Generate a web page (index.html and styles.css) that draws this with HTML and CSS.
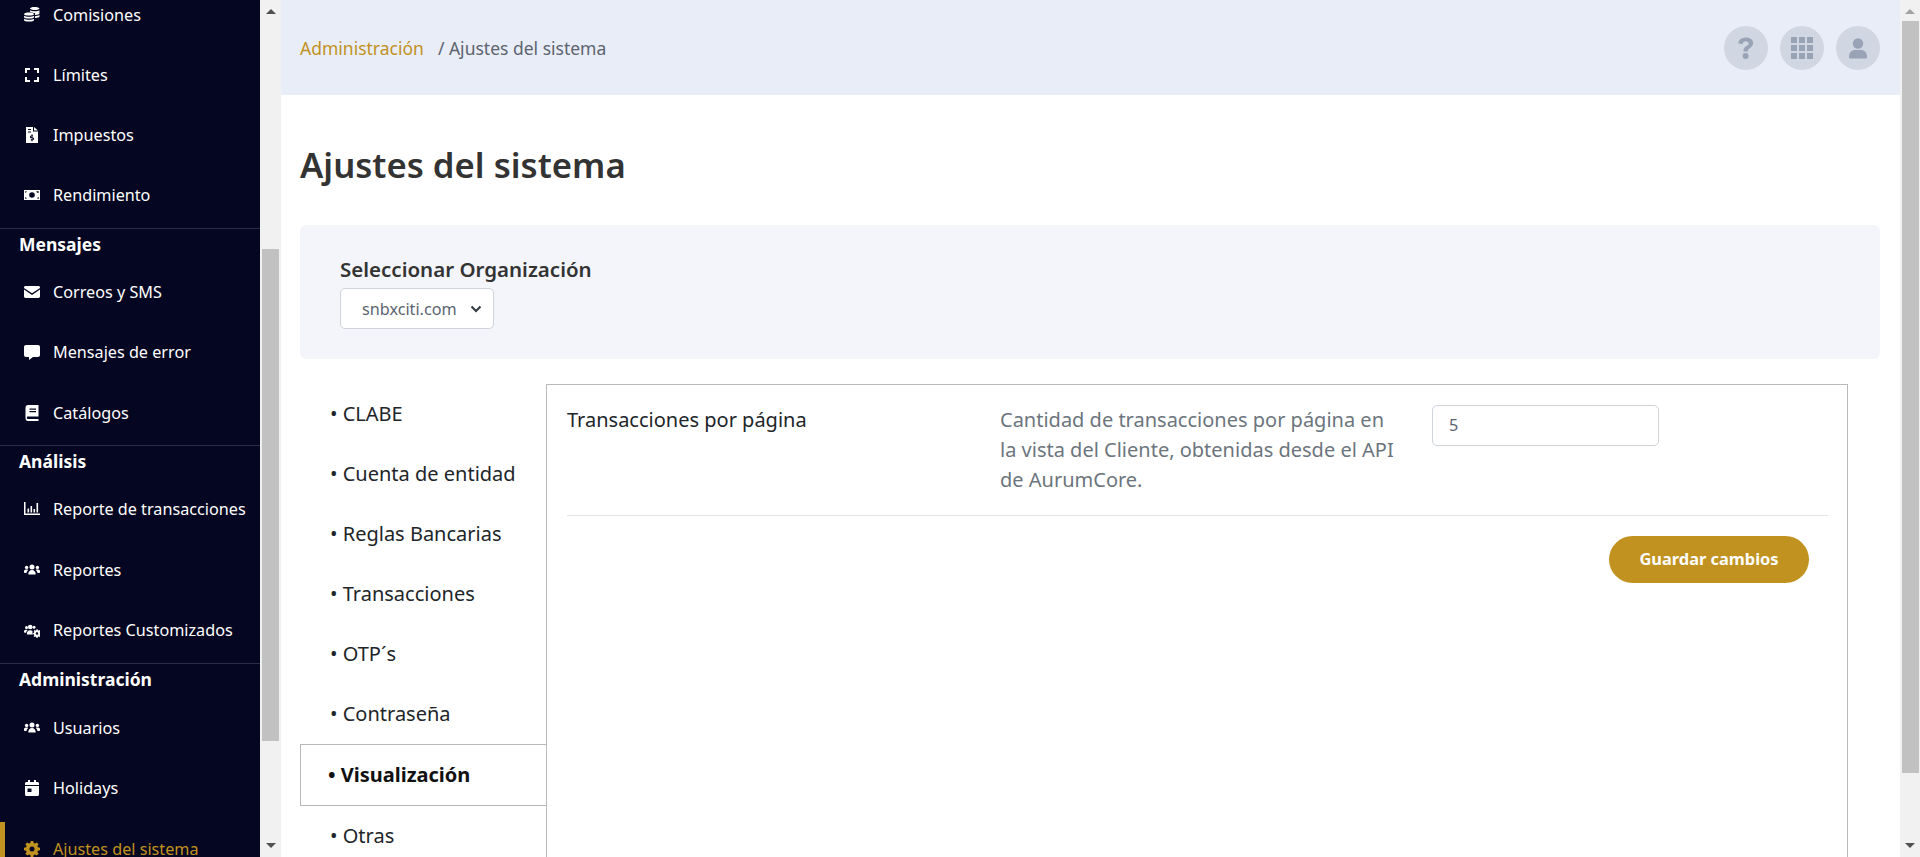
FILE: index.html
```html
<!DOCTYPE html>
<html lang="es">
<head>
    <meta charset="UTF-8">
    <meta name="viewport" content="width=device-width, initial-scale=1.0">
    <title>Ajustes del sistema</title>
    <link rel="stylesheet" href="styles.css">
</head>
<body>
    <aside class="sidebar">
        <nav class="side-list">
            <a class="side-item" href="#">
                <svg class="side-icon" viewBox="0 0 16 16"><path d="M6 1.500c0-.8 2-1.500 4.500-1.500s5 .7 5 1.500S13.500 3 11 3 6 2.300 6 1.500zM6 3.200C7 4 9 4.300 11 4.300s3.600-.4 4.500-1v1.300c0 .8-2 1.500-4.500 1.500-.6 0-1.200 0-1.700-.1C8.500 5.200 7 4.800 6 4.700zM0 7c0-.9 2.200-1.600 5-1.600s5 .7 5 1.600-2.200 1.600-5 1.600S0 7.900 0 7zm0 1.700c1 .8 3 1.100 5 1.100s4-.3 5-1.100V10c0 .9-2.200 1.600-5 1.600S0 10.900 0 10zm0 3c1 .8 3 1.100 5 1.100s4-.3 5-1.100V13c0 .9-2.200 1.600-5 1.600S0 13.900 0 13zm11-5.500c1.800-.1 3.500-.5 4.500-1.100v1.300c0 .7-1.800 1.300-4.500 1.500zm0 3c1.800-.1 3.500-.5 4.500-1.100v1.300c0 .7-1.800 1.300-4.500 1.500z"/></svg>
                <span>Comisiones</span>
            </a>
            <a class="side-item" href="#">
                <svg class="side-icon" viewBox="0 0 16 16"><path d="M1 1h5v2H3v3H1zM10 1h5v5h-2V3h-3zM1 10h2v3h3v2H1zM13 10h2v5h-5v-2h3z"/></svg>
                <span>Límites</span>
            </a>
            <a class="side-item" href="#">
                <svg class="side-icon" viewBox="0 0 16 16"><path fill-rule="evenodd" d="M2 0h7v4.500h5V16H2zM4 2v1h3V2zm0 2.500v1h3v-1zM10 0l4 3.500h-4zM7.400 7.500v1c-1 .2-1.500.8-1.500 1.500 0 1.800 3 1.200 3 2 0 .4-.8.4-1.900.1l-.4 1c.3.100.5.200.8.200v1h1.200v-1c1-.2 1.500-.8 1.500-1.500 0-1.800-3-1.300-3-2 0-.4.700-.4 1.700-.1l.4-1-.6-.2v-1z"/></svg>
                <span>Impuestos</span>
            </a>
            <a class="side-item" href="#">
                <svg class="side-icon" viewBox="0 0 16 16"><path fill-rule="evenodd" d="M0 3h16v10H0zm8 2.200a2.800 2.800 0 1 0 0 5.600 2.800 2.800 0 0 0 0-5.600zM1.200 4.200v1.500c.8 0 1.500-.7 1.500-1.500zm11.100 0c0 .8.700 1.500 1.500 1.500h1V4.200zm-11.100 6v1.600h1.500c0-.9-.7-1.600-1.500-1.600zm13.600 0c-.9 0-1.500.7-1.500 1.600h1.500z"/></svg>
                <span>Rendimiento</span>
            </a>

            <h3 class="side-title">Mensajes</h3>
            <a class="side-item" href="#">
                <svg class="side-icon" viewBox="0 0 16 16"><path d="M1.500 2h13c.8 0 1.500.7 1.500 1.500v.4L8 9.300 0 3.900v-.4C0 2.700.7 2 1.500 2zM0 5.600l8 5.300 8-5.300v7c0 .8-.7 1.400-1.500 1.400h-13C.7 14 0 13.400 0 12.600z"/></svg>
                <span>Correos y SMS</span>
            </a>
            <a class="side-item" href="#">
                <svg class="side-icon" viewBox="0 0 16 16"><path d="M2 1h12c1.100 0 2 .9 2 2v8c0 1.100-.9 2-2 2H9l-4 3v-3H2c-1.100 0-2-.9-2-2V3c0-1.100.9-2 2-2z"/></svg>
                <span>Mensajes de error</span>
            </a>
            <a class="side-item" href="#">
                <svg class="side-icon" viewBox="0 0 16 16"><path fill-rule="evenodd" d="M4 0h10.500v11.500H4c-.7 0-1.200.5-1.200 1.200S3.300 14 4 14h10.500v2H4c-1.500 0-2.500-1.300-2.500-2.700V2.700C1.500 1.200 2.500 0 4 0zm1.500 3.500v1.200h6.500V3.500zm0 2.500v1.200h6.500V6z"/></svg>
                <span>Catálogos</span>
            </a>

            <h3 class="side-title">Análisis</h3>
            <a class="side-item" href="#">
                <svg class="side-icon" viewBox="0 0 16 16"><path d="M0 1h1.500v11.500H16V14H0zM3.500 7.500h1.600v4H3.500zM6.500 5h1.600v6.500H6.500zM9.500 8h1.600v3.500H9.500zM12.500 2h1.600v9.500h-1.600z"/></svg>
                <span>Reporte de transacciones</span>
            </a>
            <a class="side-item" href="#">
                <svg class="side-icon" viewBox="0 0 16 16"><circle cx="2.600" cy="5.400" r="1.700"/><circle cx="13.400" cy="5.400" r="1.700"/><circle cx="8" cy="5" r="2.500"/><path d="M4.300 12c0-2.300 1.500-4 3.700-4s3.700 1.700 3.700 4c0 .4-.3.600-.7.600H5c-.4 0-.7-.2-.7-.6zM0 9.500C0 8.300.8 7.600 1.800 7.600h1.300c.4 0 .8.100 1.100.3-1 .8-1.500 1.800-1.700 3H.8c-.5 0-.8-.3-.8-.7zM16 9.500c0-1.200-.8-1.900-1.800-1.900h-1.300c-.4 0-.8.100-1.100.3 1 .8 1.500 1.800 1.700 3h1.700c.5 0 .8-.3.800-.7z"/></svg>
                <span>Reportes</span>
            </a>
            <a class="side-item" href="#">
                <svg class="side-icon" viewBox="0 0 16 16"><circle cx="2.500" cy="5.500" r="1.500"/><circle cx="10" cy="5.200" r="1.500"/><circle cx="6.200" cy="5" r="2.300"/><path d="M2.800 12c0-2.200 1.400-3.800 3.400-3.800 1 0 1.800.3 2.400 1-.4 1 0 2 .3 3.300H3.500c-.4 0-.7-.2-.7-.5zM0 9.500c0-1.100.7-1.800 1.600-1.800h1.100c.3 0 .6.100.9.200-.8.700-1.300 1.700-1.500 2.800H.7c-.4 0-.7-.3-.7-.7z"/><path fill-rule="evenodd" d="M12.500 7.200h1l.3 1 .9.400.9-.5.700.8-.5.900.2.900.9.400v1l-.9.400-.2.900.5.900-.7.800-.9-.5-.9.400-.3 1h-1l-.3-1-.9-.4-.9.5-.7-.8.5-.9-.2-.9-.9-.4v-1l.9-.4.2-.9-.5-.9.7-.8.9.5.9-.4zm.5 3a1.300 1.300 0 1 0 0 2.600 1.300 1.300 0 0 0 0-2.600z"/></svg>
                <span>Reportes Customizados</span>
            </a>

            <h3 class="side-title admin">Administración</h3>
            <a class="side-item" href="#">
                <svg class="side-icon" viewBox="0 0 16 16"><circle cx="2.600" cy="5.400" r="1.700"/><circle cx="13.400" cy="5.400" r="1.700"/><circle cx="8" cy="5" r="2.500"/><path d="M4.300 12c0-2.300 1.500-4 3.700-4s3.700 1.700 3.700 4c0 .4-.3.600-.7.600H5c-.4 0-.7-.2-.7-.6zM0 9.500C0 8.300.8 7.600 1.800 7.600h1.300c.4 0 .8.100 1.100.3-1 .8-1.500 1.800-1.700 3H.8c-.5 0-.8-.3-.8-.7zM16 9.500c0-1.200-.8-1.900-1.800-1.900h-1.300c-.4 0-.8.100-1.100.3 1 .8 1.500 1.800 1.700 3h1.700c.5 0 .8-.3.800-.7z"/></svg>
                <span>Usuarios</span>
            </a>
            <a class="side-item" href="#">
                <svg class="side-icon" viewBox="0 0 16 16"><path fill-rule="evenodd" d="M4 0h2v2h4V0h2v2h1.500c.8 0 1.500.7 1.500 1.500V5H1V3.500C1 2.700 1.700 2 2.500 2H4zM1 6h14v8.500c0 .8-.7 1.500-1.500 1.500h-11C1.700 16 1 15.300 1 14.500zm2.500 2.500v3.500h4V8.500z"/></svg>
                <span>Holidays</span>
            </a>
            <a class="side-item active" href="#">
                <svg class="side-icon" viewBox="0 0 16 16"><path fill-rule="evenodd" d="M6.700 0h2.600l.4 2.100 1.200.5 1.800-1.200 1.900 1.900-1.200 1.800.5 1.200 2.100.4v2.600l-2.100.4-.5 1.200 1.200 1.800-1.900 1.900-1.800-1.200-1.200.5-.4 2.100H6.700l-.4-2.100-1.200-.5-1.800 1.200-1.900-1.900 1.200-1.800-.5-1.200L0 9.300V6.700l2.100-.4.5-1.200-1.200-1.800 1.900-1.900 1.800 1.200 1.200-.5zM8 5.500a2.500 2.500 0 1 0 0 5 2.500 2.500 0 0 0 0-5z"/></svg>
                <span>Ajustes del sistema</span>
            </a>
        </nav>
    </aside>

    <div class="scrollbar side-scroll">
        <div class="arrow-up"></div>
        <div class="thumb"></div>
        <div class="arrow-down"></div>
    </div>

    <main class="main">
        <header class="topbar">
            <div class="breadcrumb">
                <a href="#">Administración</a>
                <span>/ Ajustes del sistema</span>
            </div>
            <div class="top-actions">
                <button class="round-btn" type="button">
                    <svg viewBox="0 0 24 24" width="24" height="24"><path d="M12 1.500c-4.300 0-7.200 2.300-7.800 5.700l4.200 1c.3-1.800 1.600-2.900 3.400-2.900 1.600 0 2.800.8 2.800 2.100 0 1.100-.7 1.700-2.200 2.700-1.900 1.200-2.900 2.400-2.900 4.600v.9h4.300v-.6c0-1.100.5-1.700 2-2.700 2.200-1.500 3.300-3 3.300-5.200 0-3.400-2.900-5.600-7.100-5.600z"/><circle cx="11.600" cy="20" r="3"/></svg>
                </button>
                <button class="round-btn" type="button">
                    <svg viewBox="0 0 24 24" width="24" height="24"><path d="M1 1h6v6H1zM9 1h6v6H9zM17 1h6v6h-6zM1 9h6v6H1zM9 9h6v6H9zM17 9h6v6h-6zM1 17h6v6H1zM9 17h6v6H9zM17 17h6v6h-6z"/></svg>
                </button>
                <button class="round-btn" type="button">
                    <svg viewBox="0 0 24 24" width="24" height="24"><circle cx="12" cy="7.500" r="5.200"/><path d="M3 21c0-4.500 2.800-7 6-7h6c3.200 0 6 2.500 6 7 0 1-.6 1.600-1.500 1.600h-15C3.600 22.600 3 22 3 21z"/></svg>
                </button>
            </div>
        </header>

        <div class="content">
            <h1>Ajustes del sistema</h1>

            <section class="org-panel">
                <label for="org">Seleccionar Organización</label>
                <select id="org">
                    <option>snbxciti.com</option>
                </select>
            </section>

            <div class="settings">
                <ul class="tabs">
                    <li><a href="#">• CLABE</a></li>
                    <li><a href="#">• Cuenta de entidad</a></li>
                    <li><a href="#">• Reglas Bancarias</a></li>
                    <li><a href="#">• Transacciones</a></li>
                    <li><a href="#">• OTP´s</a></li>
                    <li><a href="#">• Contraseña</a></li>
                    <li class="selected"><a href="#">• Visualización</a></li>
                    <li><a href="#">• Otras</a></li>
                </ul>
                <div class="tab-body">
                    <div class="setting-row">
                        <div class="setting-name">Transacciones por página</div>
                        <div class="setting-desc">Cantidad de transacciones por página en la vista del Cliente, obtenidas desde el API de AurumCore.</div>
                        <input class="setting-input" type="text" value="5">
                    </div>
                    <div class="save-row">
                        <button class="save-btn" type="button">Guardar cambios</button>
                    </div>
                </div>
            </div>
        </div>
    </main>

    <div class="scrollbar page-scroll">
        <div class="arrow-up"></div>
        <div class="thumb"></div>
        <div class="arrow-down"></div>
    </div>
</body>
</html>
```

FILE: styles.css
```css
* {
    margin: 0;
    padding: 0;
    box-sizing: border-box;
}

body {
    display: flex;
    height: 857px;
    overflow: hidden;
    font-family: "Noto Sans", sans-serif;
    background-color: #fff;
    color: #212529;
}

a {
    text-decoration: none;
    color: inherit;
}

/* Sidebar */
.sidebar {
    width: 260px;
    flex-shrink: 0;
    overflow: hidden;
    background-color: #050621;
    color: #fff;
}

.side-list {
    margin-top: -15.5px;
}

.side-item {
    position: relative;
    display: flex;
    align-items: center;
    gap: 13px;
    height: 60.25px;
    padding-left: 24px;
    font-size: 16.2px;
}

.side-icon {
    width: 16px;
    height: 16px;
    flex-shrink: 0;
    fill: currentColor;
}

.side-item.active {
    color: #c1921f;
}

.side-item.active::before {
    content: "";
    position: absolute;
    top: 3px;
    bottom: 0;
    left: 0;
    width: 5px;
    background-color: #c1921f;
}

.side-title {
    margin-top: 2.5px;
    height: 34px;
    padding-left: 19px;
    border-top: 1px solid #2c2d45;
    font-size: 17.5px;
    font-weight: 700;
    line-height: 31px;
}

.side-title.admin {
    margin-top: 3px;
    height: 35px;
}

/* Fake scrollbars */
.scrollbar {
    display: flex;
    flex-direction: column;
    flex-shrink: 0;
    align-items: center;
    background-color: #f1f1f1;
}

.side-scroll {
    width: 21px;
}

.page-scroll {
    width: 20px;
}

.thumb {
    width: 17px;
    background-color: #c1c1c1;
}

.side-scroll .thumb {
    height: 492px;
    margin-top: 228px;
}

.page-scroll .thumb {
    height: 752px;
}

.arrow-up,
.arrow-down {
    width: 0;
    height: 0;
    margin-top: 9px;
    margin-bottom: 7px;
    border-left: 5px solid transparent;
    border-right: 5px solid transparent;
}

.arrow-up {
    border-bottom: 5px solid #505050;
}

.arrow-down {
    margin-top: auto;
    margin-bottom: 9px;
    border-top: 5px solid #505050;
}

.page-scroll .arrow-up {
    border-bottom-color: #a3a3a3;
}

/* Main area */
.main {
    flex: 1;
    min-width: 0;
}

.topbar {
    display: flex;
    align-items: center;
    justify-content: space-between;
    height: 95px;
    padding: 0 20px 0 19px;
    background-color: #e9edf7;
}

.breadcrumb {
    display: flex;
    gap: 14px;
    font-size: 17.5px;
    color: #5c6470;
}

.breadcrumb a {
    color: #c1921f;
}

.top-actions {
    display: flex;
    gap: 12px;
}

.round-btn {
    display: flex;
    align-items: center;
    justify-content: center;
    width: 44px;
    height: 44px;
    border: none;
    border-radius: 50%;
    background-color: #d0d6e2;
    fill: #98a3b5;
}

.content {
    padding: 0 20px 0 19px;
}

h1 {
    padding-top: 47px;
    margin-bottom: 37px;
    font-size: 34.7px;
    line-height: 46px;
    font-weight: 600;
    color: #333;
}

.org-panel {
    display: flex;
    flex-direction: column;
    align-items: flex-start;
    height: 134px;
    padding: 30px 40px;
    border-radius: 6px;
    background-color: #f4f5fb;
}

.org-panel label {
    margin-bottom: 4px;
    font-size: 20.5px;
    font-weight: 600;
    line-height: 29px;
    color: #333;
}

.org-panel select {
    width: 154px;
    height: 41px;
    padding-left: 21px;
    appearance: none;
    font-family: inherit;
    font-size: 16.2px;
    color: #5c6470;
    background: #fff url("data:image/svg+xml,%3Csvg xmlns='http://www.w3.org/2000/svg' width='12' height='8'%3E%3Cpath d='M1.500 1.500L6 6l4.500-4.500' fill='none' stroke='%23343a40' stroke-width='2'/%3E%3C/svg%3E") no-repeat right 11px center;
    border: 1px solid #ced4da;
    border-radius: 5px;
}

/* Tabs + settings */
.settings {
    display: flex;
    margin-top: 25px;
    margin-right: 32px;
}

.tabs {
    width: 246px;
    flex-shrink: 0;
    list-style: none;
}

.tabs li {
    display: flex;
    align-items: center;
    height: 60px;
    padding: 0 0 2px 30px;
    font-size: 20px;
}

.tabs li.selected {
    height: 62px;
    padding-left: 27px;
    font-weight: 700;
    color: #111;
    border: 1px solid #b9b9b9;
    border-right: none;
}

.tab-body {
    flex: 1;
    height: 520px;
    padding: 0 19px 0 20px;
    border: 1px solid #b9b9b9;
}

.setting-row {
    display: flex;
    align-items: flex-start;
    padding: 20px 0;
    border-bottom: 1px solid #e2e4e8;
    font-size: 20px;
    line-height: 30px;
}

.setting-name {
    width: 433px;
    flex-shrink: 0;
}

.setting-desc {
    width: 400px;
    flex-shrink: 0;
    color: #6c757d;
}

.setting-input {
    width: 227px;
    height: 41px;
    margin-left: 32px;
    padding: 0 16px 2px;
    font-family: inherit;
    font-size: 16.2px;
    color: #5c6470;
    border: 1px solid #ced4da;
    border-radius: 5px;
}

.save-row {
    display: flex;
    justify-content: flex-end;
    padding: 20px 19px 0 0;
}

.save-btn {
    width: 200px;
    height: 47px;
    padding-bottom: 2px;
    border: none;
    border-radius: 24px;
    font-family: inherit;
    font-size: 16.4px;
    font-weight: 700;
    color: #fff;
    background-color: #c1921f;
}
```
